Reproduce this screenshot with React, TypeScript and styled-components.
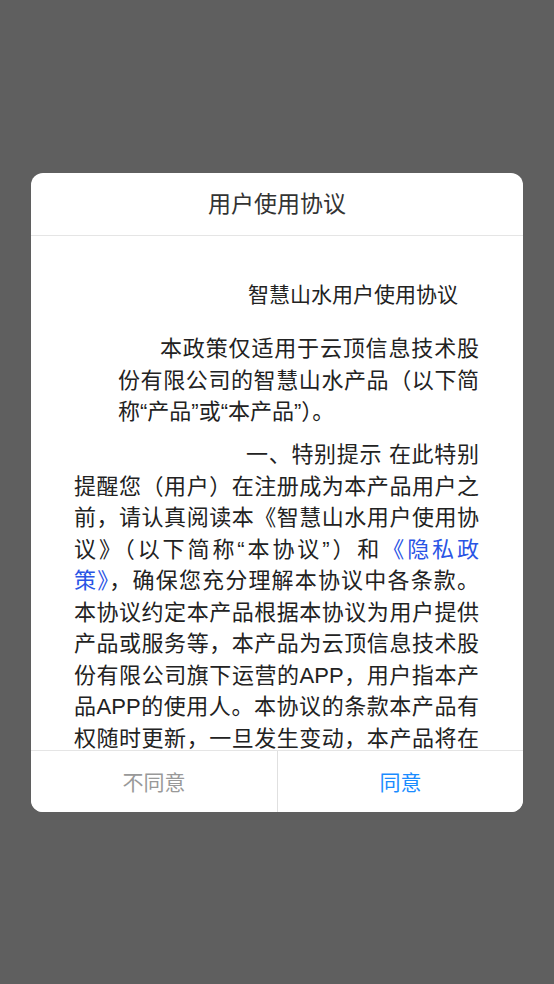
import styled, { createGlobalStyle } from "styled-components";

const GlobalStyle = createGlobalStyle`
  html, body {
    margin: 0;
    padding: 0;
    background: #5f5f5f;
  }
  * {
    box-sizing: border-box;
  }
`;

const Page = styled.div`
  display: flex;
  align-items: center;
  justify-content: center;
  min-height: 100vh;
  font-family: "Liberation Sans", "Noto Sans CJK SC", sans-serif;
`;

const Dialog = styled.div`
  display: flex;
  flex-direction: column;
  width: 492px;
  height: 639px;
  background: #fff;
  border-radius: 12px;
  overflow: hidden;
`;

const Title = styled.div`
  height: 63px;
  line-height: 62px;
  text-align: center;
  font-size: 23px;
  color: #333;
  border-bottom: 1px solid #e5e5e5;
`;

const Body = styled.div`
  flex: 1;
  overflow: hidden;
  padding: 43px 44px 0 43px;
  color: #222;
  font-size: 22px;
  line-height: 31.5px;
`;

const Heading = styled.p`
  margin: 0 0 23px;
  padding-left: 174px;
  font-size: 21px;
`;

const Para = styled.p<{ $indent: number; $inset?: number }>`
  margin: 0 0 11.5px;
  margin-left: ${(p) => p.$inset ?? 0}px;
  text-indent: ${(p) => p.$indent}px;
  text-align: justify;
`;

const Link = styled.span`
  color: #2a55e5;
`;

const Footer = styled.div`
  display: grid;
  grid-template-columns: 1fr 1fr;
  height: 62px;
  border-top: 1px solid #e5e5e5;
`;

const Action = styled.button<{ $primary?: boolean }>`
  border: none;
  background: #fff;
  font-family: inherit;
  font-size: 21px;
  color: ${(p) => (p.$primary ? "#1a8cff" : "#999")};
  & + & {
    border-left: 1px solid #e0e0e0;
  }
`;

export default function App() {
  return (
    <>
      <GlobalStyle />
      <Page>
        <Dialog>
          <Title>用户使用协议</Title>
          <Body>
            <Heading>智慧山水用户使用协议</Heading>
            <Para $inset={44} $indent={42}>
              本政策仅适用于云顶信息技术股份有限公司的智慧山水产品（以下简称“产品”或“本产品”）。
            </Para>
            <Para $indent={172}>
              一、特别提示 在此特别提醒您（用户）在注册成为本产品用户之前，请认真阅读本《智慧山水用户使用协议》（以下简称“本协议”）和
              <Link>《隐私政策》</Link>
              ，确保您充分理解本协议中各条款。本协议约定本产品根据本协议为用户提供产品或服务等，本产品为云顶信息技术股份有限公司旗下运营的APP，用户指本产品APP的使用人。本协议的条款本产品有权随时更新，一旦发生变动，本产品将在相关页面上公布修订后的协议内容，修订后的协议一经公布即有效代替原来的协议。
            </Para>
          </Body>
          <Footer>
            <Action>不同意</Action>
            <Action $primary>同意</Action>
          </Footer>
        </Dialog>
      </Page>
    </>
  );
}
